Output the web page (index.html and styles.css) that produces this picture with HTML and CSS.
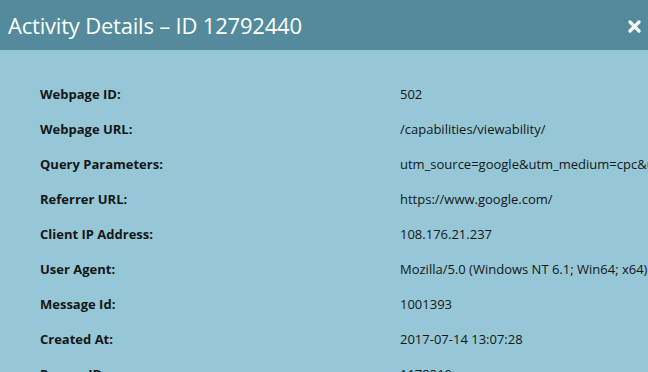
FILE: index.html
```html
<!doctype html>
<html>
<head>
  <title>Activity Details</title>
  <link rel="stylesheet" href="styles.css">
</head>
<body>
  <div class='modal'>
    <div class='modal-header'>
      <h1 class='modal-title'>Activity Details &ndash; ID 12792440</h1>
      <span class='close'>
        <svg width="13" height="13" viewBox="0 0 13 13"><path d="M2 2 L11 11 M11 2 L2 11" stroke="#fff" stroke-width="3.2" stroke-linecap="round"/></svg>
      </span>
    </div>
    <div class='modal-body'>
      <div class='row'><div class='label'>Webpage ID:</div><div class='value'>502</div></div>
      <div class='row'><div class='label'>Webpage URL:</div><div class='value'>/capabilities/viewability/</div></div>
      <div class='row'><div class='label'>Query Parameters:</div><div class='value'>utm_source=google&amp;utm_medium=cpc&amp;utm_campaign=viewability</div></div>
      <div class='row'><div class='label'>Referrer URL:</div><div class='value'>https://www.google.com/</div></div>
      <div class='row'><div class='label'>Client IP Address:</div><div class='value'>108.176.21.237</div></div>
      <div class='row'><div class='label'>User Agent:</div><div class='value'>Mozilla/5.0 (Windows NT 6.1; Win64; x64) AppleWebKit/537.36 (KHTML, like Gecko)</div></div>
      <div class='row'><div class='label'>Message Id:</div><div class='value'>1001393</div></div>
      <div class='row'><div class='label'>Created At:</div><div class='value'>2017-07-14 13:07:28</div></div>
      <div class='row'><div class='label'>Person ID:</div><div class='value'>1178319</div></div>
    </div>
  </div>
</body>
</html>
```
FILE: styles.css
```css
html, body {
  margin: 0;
  padding: 0;
  height: 100%;
  overflow: hidden;
}
body {
  font-family: "Open Sans", "Liberation Sans", sans-serif;
  background-color: #95c7d7;
  color: #161616;
}
.modal-header {
  height: 50px;
  background-color: #538b9c;
  display: flex;
  align-items: center;
  justify-content: space-between;
  padding: 0 7px 0 8px;
}
.modal-title {
  margin: 0;
  font-size: 22px;
  font-weight: 400;
  color: #fff;
  letter-spacing: -0.2px;
}
.close {
  display: flex;
  width: 13px;
  height: 13px;
  margin-top: 2px;
}
.modal-body {
  padding: 27px 0 0 40px;
}
.row {
  display: flex;
  height: 35px;
  line-height: 35px;
  font-size: 13px;
  white-space: nowrap;
}
.label {
  width: 360px;
  flex: none;
  font-weight: 700;
}
.value {
  font-weight: 400;
}
```
